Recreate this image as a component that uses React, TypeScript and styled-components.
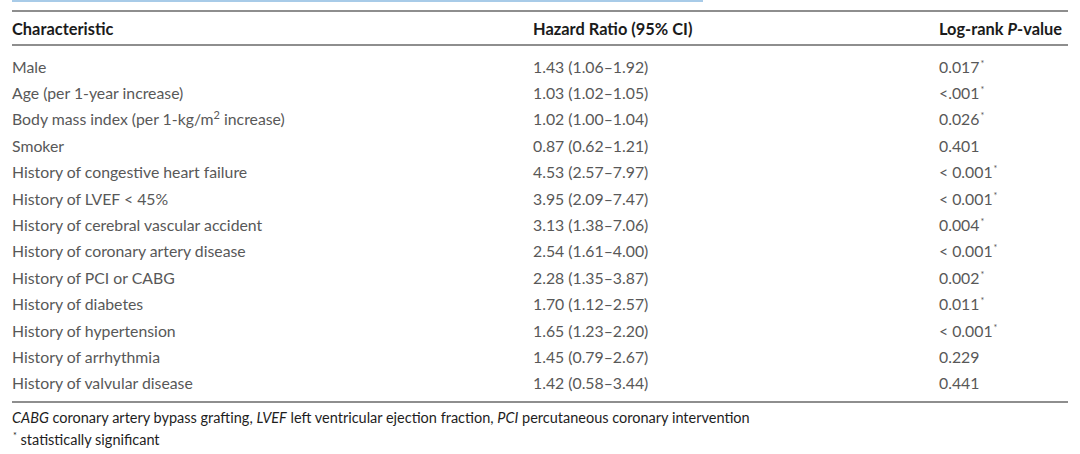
import React from "react";
import styled, { createGlobalStyle } from "styled-components";

const Global = createGlobalStyle`
  html, body { margin: 0; padding: 0; background: #fff; }
  body { font-family: Lato, "Open Sans", sans-serif; }
`;

const Page = styled.div`
  width: 1080px;
  height: 454px;
  padding: 0 12px;
  box-sizing: border-box;
  background: #fff;
  overflow: hidden;
`;

const CutBar = styled.div`
  width: 691px;
  height: 2px;
  background: #a8cbe8;
  margin-bottom: 8px;
`;

const Table = styled.table`
  width: 1056px;
  border-collapse: collapse;
  table-layout: fixed;
  font-size: 15.8px;
`;

const HeadRow = styled.tr`
  border-top: 2px solid #8e8e8e;
  border-bottom: 2px solid #8e8e8e;
`;

const Th = styled.th`
  text-align: left;
  font-weight: 700;
  font-size: 16.4px;
  color: #1b1b1b;
  height: 32px;
  padding: 0;
  vertical-align: middle;
  white-space: nowrap;
`;

const SpacerRow = styled.tr`
  height: 8px;
`;

const Row = styled.tr`
  height: 26.4px;
`;

const Td = styled.td`
  padding: 0;
  color: #585858;
  white-space: nowrap;
  vertical-align: middle;
`;

const EndRow = styled.tr`
  height: 6px;
  border-bottom: 2px solid #8e8e8e;
`;

const Star = styled.sup`
  font-size: 9px;
  vertical-align: 6px;
  line-height: 0;
  margin-left: 1px;
`;

const Sq = styled.sup`
  font-size: 11px;
  line-height: 0;
`;

const Notes = styled.div`
  padding-top: 4px;
  font-size: 14.5px;
  color: #1e1e1e;
  line-height: 22px;
`;

const Abbr = styled.i`
  font-style: italic;
`;

type R = { c: React.ReactNode; hr: string; p: string; sig: boolean };

const rows: R[] = [
  { c: "Male", hr: "1.43 (1.06–1.92)", p: "0.017", sig: true },
  { c: "Age (per 1-year increase)", hr: "1.03 (1.02–1.05)", p: "<.001", sig: true },
  {
    c: (
      <>
        Body mass index (per 1-kg/m<Sq>2</Sq> increase)
      </>
    ),
    hr: "1.02 (1.00–1.04)",
    p: "0.026",
    sig: true,
  },
  { c: "Smoker", hr: "0.87 (0.62–1.21)", p: "0.401", sig: false },
  { c: "History of congestive heart failure", hr: "4.53 (2.57–7.97)", p: "< 0.001", sig: true },
  { c: "History of LVEF < 45%", hr: "3.95 (2.09–7.47)", p: "< 0.001", sig: true },
  { c: "History of cerebral vascular accident", hr: "3.13 (1.38–7.06)", p: "0.004", sig: true },
  { c: "History of coronary artery disease", hr: "2.54 (1.61–4.00)", p: "< 0.001", sig: true },
  { c: "History of PCI or CABG", hr: "2.28 (1.35–3.87)", p: "0.002", sig: true },
  { c: "History of diabetes", hr: "1.70 (1.12–2.57)", p: "0.011", sig: true },
  { c: "History of hypertension", hr: "1.65 (1.23–2.20)", p: "< 0.001", sig: true },
  { c: "History of arrhythmia", hr: "1.45 (0.79–2.67)", p: "0.229", sig: false },
  { c: "History of valvular disease", hr: "1.42 (0.58–3.44)", p: "0.441", sig: false },
];

export default function App() {
  return (
    <Page>
      <Global />
      <CutBar />
      <Table>
        <colgroup>
          <col style={{ width: "521px" }} />
          <col style={{ width: "406px" }} />
          <col style={{ width: "129px" }} />
        </colgroup>
        <thead>
          <HeadRow>
            <Th>Characteristic</Th>
            <Th>Hazard Ratio (95% CI)</Th>
            <Th>
              Log-rank <i>P</i>-value
            </Th>
          </HeadRow>
        </thead>
        <tbody>
          <SpacerRow />
          {rows.map((r, i) => (
            <Row key={i}>
              <Td>{r.c}</Td>
              <Td>{r.hr}</Td>
              <Td>
                {r.p}
                {r.sig && <Star>*</Star>}
              </Td>
            </Row>
          ))}
          <EndRow>
            <Td />
            <Td />
            <Td />
          </EndRow>
        </tbody>
      </Table>
      <Notes>
        <div>
          <Abbr>CABG</Abbr> coronary artery bypass grafting, <Abbr>LVEF</Abbr> left ventricular ejection fraction,{" "}
          <Abbr>PCI</Abbr> percutaneous coronary intervention
        </div>
        <div>
          <Star>*</Star> statistically significant
        </div>
      </Notes>
    </Page>
  );
}
